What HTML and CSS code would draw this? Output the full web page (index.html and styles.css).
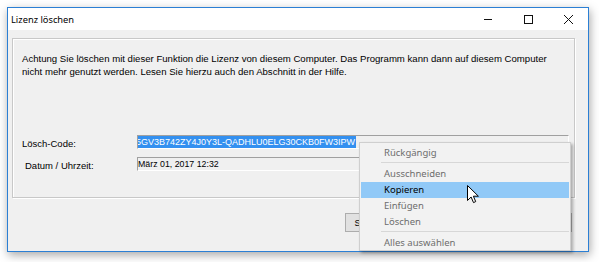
FILE: index.html
```html
<!DOCTYPE html>
<html lang="de">
<head>
<meta charset="utf-8">
<title>Lizenz löschen</title>
<link rel="stylesheet" href="styles.css">
</head>
<body>
<div class="window">
  <div class="titlebar">
    <span class="title">Lizenz löschen</span>
    <div class="controls">
      <span class="ctl"><svg width="10" height="10" viewBox="0 0 10 10"><path d="M1 5.5h8" stroke="#111" stroke-width="1"/></svg></span>
      <span class="ctl"><svg width="10" height="10" viewBox="0 0 10 10"><rect x="1.5" y="1.5" width="8" height="8" fill="none" stroke="#111" stroke-width="1"/></svg></span>
      <span class="ctl"><svg width="11" height="11" viewBox="0 0 11 11"><path d="M1 1l9 9M10 1l-9 9" stroke="#111" stroke-width="1"/></svg></span>
    </div>
  </div>
  <div class="client">
    <div class="group">
      <p class="info">Achtung Sie löschen mit dieser Funktion die Lizenz von diesem Computer. Das Programm kann dann auf diesem Computer nicht mehr genutzt werden. Lesen Sie hierzu auch den Abschnitt in der Hilfe.</p>
      <div class="form">
        <span class="label">Lösch-Code:</span>
        <div class="field"><span class="sel">5GV3B742ZY4J0Y3L-QADHLU0ELG30CKB0FW3IPW</span></div>
        <span class="label label-indent">Datum / Uhrzeit:</span>
        <div class="field">März 01, 2017 12:32</div>
      </div>
    </div>
    <div class="buttons">
      <span class="btn">Schließen</span>
      <span class="btn"></span>
      <span class="btn"></span>
    </div>
  </div>
  <div class="menu">
    <div class="item disabled">Rückgängig</div>
    <div class="sep"></div>
    <div class="item disabled">Ausschneiden</div>
    <div class="item active">Kopieren</div>
    <div class="item disabled">Einfügen</div>
    <div class="item disabled">Löschen</div>
    <div class="sep"></div>
    <div class="item disabled">Alles auswählen</div>
  </div>
  <svg class="cursor" width="12" height="19" viewBox="0 0 12 19"><path d="M0.5 0.5v15l3.6-3.5 2.4 5.6 2.2-1-2.3-5.4h5z" fill="#fff" stroke="#000" stroke-width="1" stroke-linejoin="round"/></svg>
</div>
</body>
</html>
```
FILE: styles.css
```css
* { box-sizing: border-box; }
html, body { margin: 0; padding: 0; background: #fff; }
body { width: 599px; height: 262px; overflow: hidden; }

.window {
  position: relative;
  margin: 7px 0 0 7px;
  width: 582px;
  height: 245px;
  border: 1px solid #2b7fd4;
  box-shadow: 1px 3px 9px rgba(0,0,0,0.35);
  display: flex;
  flex-direction: column;
}

.titlebar {
  height: 22px;
  background: #fff;
  display: flex;
  align-items: center;
  padding-left: 3px;
}
.title {
  font-family: "Noto Sans", sans-serif;
  font-size: 9.3px;
  color: #000;
  flex: 1;
}
.controls { display: flex; height: 100%; }
.ctl {
  width: 40px;
  height: 100%;
  display: flex;
  align-items: center;
  justify-content: center;
}

.client {
  flex: 1;
  background: #f0f0f0;
  padding: 8px 16px 0 4px;
  font-family: "Liberation Sans", Arial, sans-serif;
  font-size: 9.5px;
  color: #000;
}

.group {
  height: 160px;
  margin-right: -3px;
  border: 1px solid #c8c8c8;
  box-shadow: inset 1px 1px 0 #fff, 1px 1px 0 #fff;
  padding: 13px 5px 0 9px;
}
.info {
  margin: 0;
  line-height: 13px;
  font-size: 9.6px;
  padding-right: 18px;
}
.form {
  margin-top: 57px;
  display: grid;
  grid-template-columns: 115px 1fr;
  row-gap: 8px;
}
.label { padding-top: 3px; line-height: 11px; }
.label-indent { padding-left: 3px; }
.field {
  height: 14px;
  border: 1px solid;
  border-color: #a0a0a0 #fff #fff #a0a0a0;
  background: #f0f0f0;
  line-height: 12px;
  font-size: 8.8px;
  white-space: nowrap;
  overflow: hidden;
}
.sel {
  display: inline-block;
  background: #3390f0;
  color: #fff;
  font-size: 9px;
  margin-left: -2px;
  padding-right: 1px;
}

.buttons {
  margin-top: 15px;
  display: flex;
  justify-content: flex-end;
  gap: 25px;
}
.btn {
  width: 59px;
  height: 19px;
  border: 1px solid #adadad;
  background: #e1e1e1;
  display: flex;
  align-items: center;
  justify-content: center;
  font-size: 9px;
}

.menu {
  position: absolute;
  left: 351px;
  top: 134px;
  width: 212px;
  height: 109px;
  background: #f2f2f2;
  border: 1px solid #cfcfcf;
  box-shadow: 2px 2px 3px rgba(0,0,0,0.3);
  padding: 2px 1px;
  font-family: "Noto Sans", sans-serif;
  font-size: 9.5px;
  z-index: 2;
}
.item {
  height: 16px;
  line-height: 16px;
  padding-left: 23px;
  color: #000;
}
.item.disabled { color: #6d6d6d; }
.item.active { background: #91c9f7; }
.sep {
  height: 4px;
  margin-left: 20px;
  border-top: 1px solid #d7d7d7;
  margin-top: 1px;
}

.cursor {
  position: absolute;
  left: 459px;
  top: 177px;
  z-index: 3;
}
```
